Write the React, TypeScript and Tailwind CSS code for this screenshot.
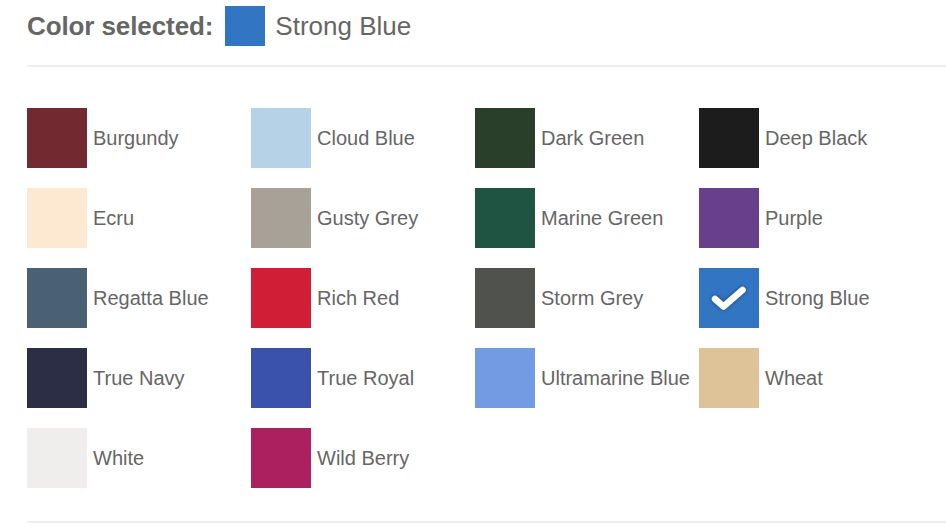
const colors: { name: string; hex: string }[] = [
  { name: "Burgundy", hex: "#722a30" },
  { name: "Cloud Blue", hex: "#b6d2e6" },
  { name: "Dark Green", hex: "#2a3f2a" },
  { name: "Deep Black", hex: "#1c1c1c" },
  { name: "Ecru", hex: "#fde8d2" },
  { name: "Gusty Grey", hex: "#a8a197" },
  { name: "Marine Green", hex: "#1f5442" },
  { name: "Purple", hex: "#683f8b" },
  { name: "Regatta Blue", hex: "#4a6175" },
  { name: "Rich Red", hex: "#d01e36" },
  { name: "Storm Grey", hex: "#50524d" },
  { name: "Strong Blue", hex: "#3276c3" },
  { name: "True Navy", hex: "#2c2e45" },
  { name: "True Royal", hex: "#3a52ac" },
  { name: "Ultramarine Blue", hex: "#739be3" },
  { name: "Wheat", hex: "#dfc398" },
  { name: "White", hex: "#efeeed" },
  { name: "Wild Berry", hex: "#ad2060" },
];

const selected = "Strong Blue";

function Check() {
  return (
    <svg width="38" height="28" viewBox="0 0 38 28" className="drop-shadow-[0_0_2px_rgba(0,0,0,0.4)]">
      <path
        d="M5 15 L13.5 22.5 L32.5 6"
        fill="none"
        stroke="#ffffff"
        strokeWidth="6.5"
        strokeLinecap="round"
        strokeLinejoin="round"
      />
    </svg>
  );
}

export default function App() {
  const current = colors.find((c) => c.name === selected)!;

  return (
    <div className="w-[946px] h-[532px] bg-white pl-[27px] pt-[6px] text-[#666666] font-['Liberation_Sans',Arial,sans-serif] overflow-hidden">
      <div className="flex items-center h-[40px]">
        <span className="text-[26px] font-bold mr-[12px] tracking-[-0.1px]">Color selected:</span>
        <span className="w-[40px] h-[40px] mr-[10px]" style={{ backgroundColor: current.hex }} />
        <span className="text-[26px]">{current.name}</span>
      </div>

      <div className="h-[2px] bg-[#eeeeee] mt-[19px]" />

      <div className="grid grid-cols-[224px_224px_224px_224px] gap-y-[20px] mt-[41px]">
        {colors.map((c) => (
          <div key={c.name} className="flex items-center h-[60px]">
            <div
              className="w-[60px] h-[60px] flex items-center justify-center shrink-0"
              style={{ backgroundColor: c.hex }}
            >
              {c.name === selected && <Check />}
            </div>
            <span className="ml-[6px] text-[20px] whitespace-nowrap -mt-[1px]">{c.name}</span>
          </div>
        ))}
      </div>

      <div className="h-[2px] bg-[#eeeeee] mt-[33px]" />
    </div>
  );
}
